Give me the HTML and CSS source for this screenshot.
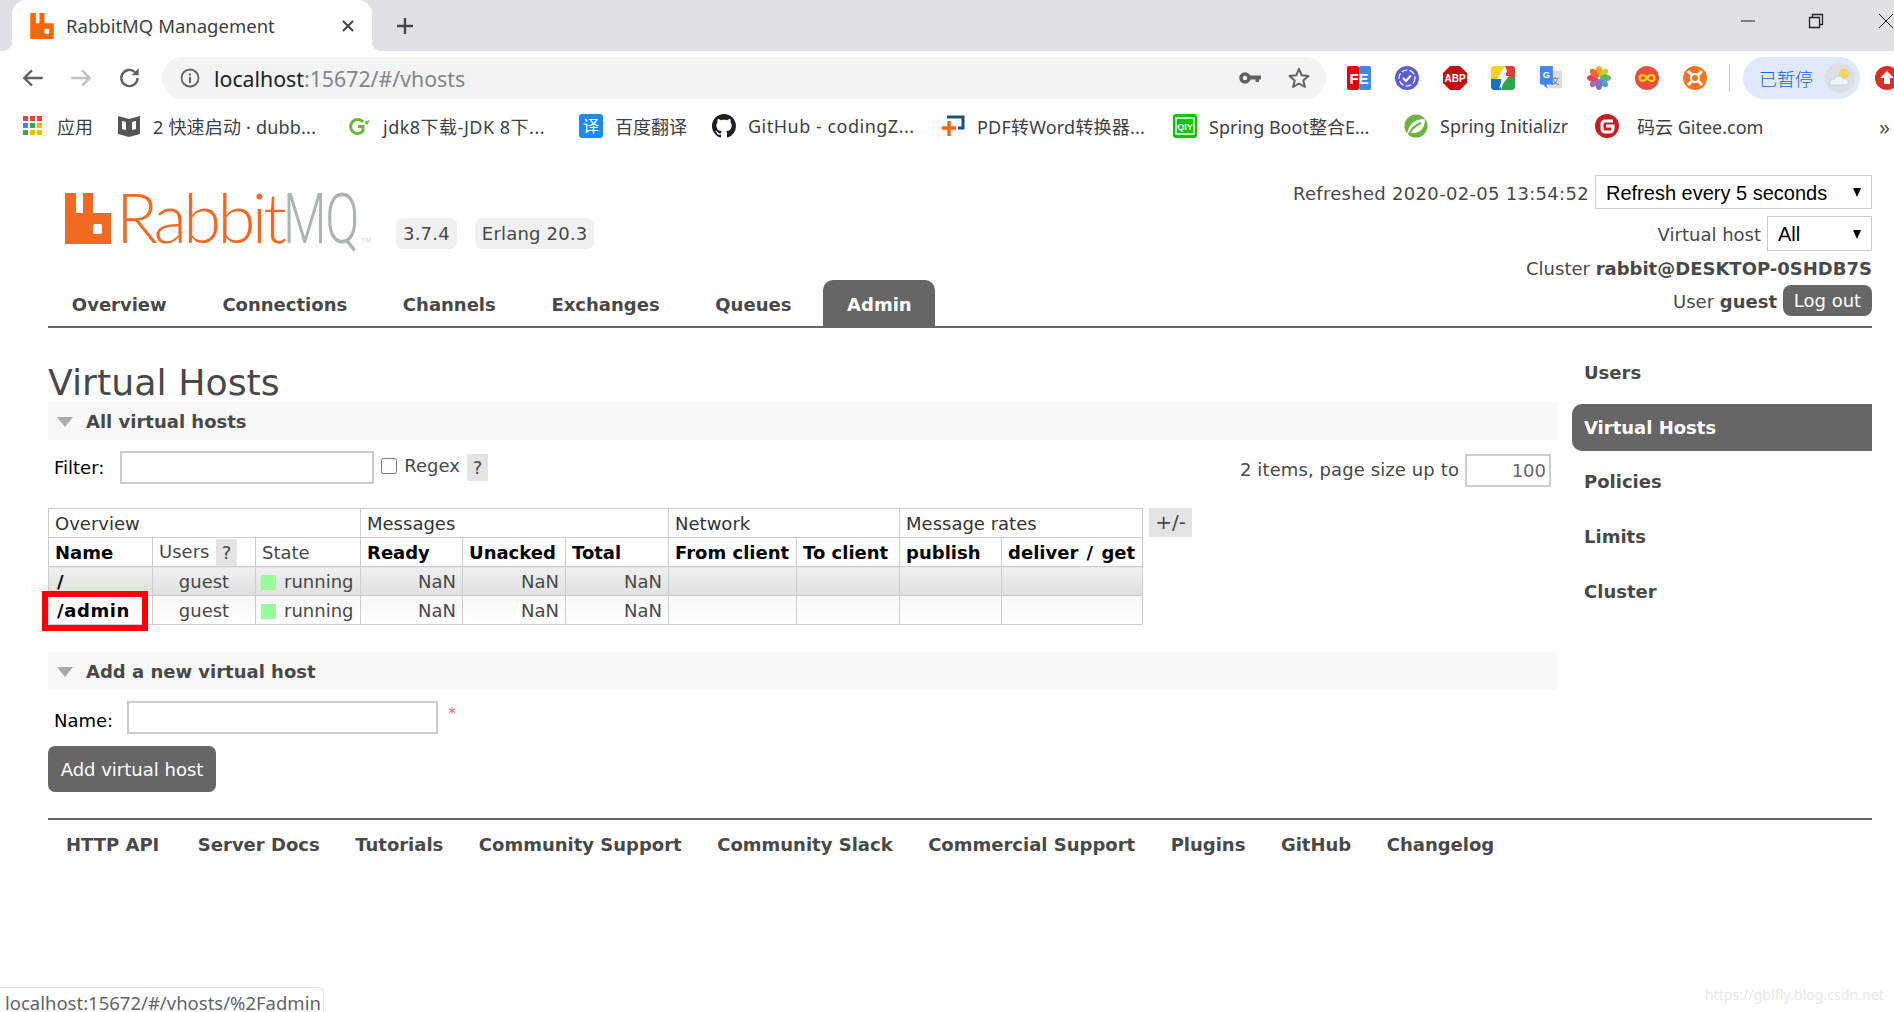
FILE: index.html
```html
<!DOCTYPE html>
<html lang="en">
<head>
    <meta charset="UTF-8">
    <meta name="viewport" content="width=device-width, initial-scale=1.0">
    <title>RabbitMQ Management</title>
    <link rel="stylesheet" href="styles.css">
</head>
<body>

    <!-- browser tabs -->
    <div class="tab_strip">
        <div class="tab">
            <svg class="favicon" viewBox="0 0 46 51"><path d="M0 0H11V20H18V0H28V20H46V51H0Z" fill="#f60"/><rect x="28" y="31" width="9" height="10" rx="2" fill="#fff"/></svg>
            <span class="tab_title">RabbitMQ Management</span>
            <svg class="tab_close" viewBox="0 0 14 14"><path d="M2 2L12 12M12 2L2 12" stroke="#444" stroke-width="2" fill="none"/></svg>
        </div>
        <svg class="new_tab" viewBox="0 0 18 18"><path d="M9 1V17M1 9H17" stroke="#444" stroke-width="2.4" fill="none"/></svg>
        <div class="window_btns">
            <svg viewBox="0 0 16 16"><path d="M1 8H15" stroke="#222" stroke-width="1" fill="none"/></svg>
            <svg viewBox="0 0 16 16"><path d="M1.5 4.5H11.5V14.5H1.5ZM4.5 4.5V1.5H14.5V11.5H11.5" stroke="#222" stroke-width="1.3" fill="none"/></svg>
            <svg viewBox="0 0 16 16"><path d="M1 1L15 15M15 1L1 15" stroke="#222" stroke-width="1" fill="none"/></svg>
        </div>
    </div>

    <!-- address bar -->
    <div class="toolbar">
        <svg class="tool_icon" viewBox="0 0 24 24"><path d="M21 12H4M11 5L4 12L11 19" stroke="#5f6368" stroke-width="2.2" fill="none"/></svg>
        <svg class="tool_icon" viewBox="0 0 24 24"><path d="M3 12H20M13 5L20 12L13 19" stroke="#bdc1c6" stroke-width="2.2" fill="none"/></svg>
        <svg class="tool_icon" viewBox="0 0 24 24"><path d="M19 12A7.5 7.5 0 1 1 16.6 6.5" stroke="#5f6368" stroke-width="2.2" fill="none"/><path d="M20 3V9.5H13.5Z" fill="#5f6368"/></svg>
        <div class="omnibox">
            <svg class="info_icon" viewBox="0 0 20 20"><circle cx="10" cy="10" r="8.5" stroke="#5f6368" stroke-width="1.8" fill="none"/><path d="M10 9V15M10 5.5V7.5" stroke="#5f6368" stroke-width="2" fill="none"/></svg>
            <span class="url"><b>localhost</b>:15672/#/vhosts</span>
            <svg class="key_icon" viewBox="0 0 22 14"><circle cx="6" cy="7" r="4" stroke="#5f6368" stroke-width="3.6" fill="none"/><path d="M10 4.5H22V8.5H20V11H16.5V8.5H10Z" fill="#5f6368"/></svg>
            <svg class="star_icon" viewBox="0 0 24 24"><path d="M12 3L14.7 9.3L21.5 9.9L16.3 14.4L17.9 21L12 17.5L6.1 21L7.7 14.4L2.5 9.9L9.3 9.3Z" stroke="#5f6368" stroke-width="2" stroke-linejoin="round" fill="none"/></svg>
        </div>
        <div class="ext_icons">
            <svg viewBox="0 0 24 24"><rect width="12" height="24" rx="2" fill="#e8000d"/><rect x="12" width="12" height="24" rx="2" fill="#3f86ee"/><text x="12" y="18" class="svg_text" font-size="15" fill="#fff" text-anchor="middle">FE</text></svg>
            <svg viewBox="0 0 24 24"><circle cx="12" cy="12" r="12" fill="#5c5fd2"/><circle cx="12" cy="12" r="8" stroke="#fff" stroke-width="1.2" stroke-dasharray="6 2" fill="none"/><path d="M8 12L11 15L16 9.5" stroke="#fff" stroke-width="2" fill="none"/></svg>
            <svg viewBox="0 0 24 24"><path d="M7 0H17L24 7V17L17 24H7L0 17V7Z" fill="#c70d0d"/><text x="12" y="16" class="svg_text" font-size="10" fill="#fff" text-anchor="middle">ABP</text></svg>
            <svg viewBox="0 0 24 24"><path d="M2 0H14L6 13H0V2Z" fill="#f7d11e"/><path d="M14 0H22L24 2V11H14L16 5Z" fill="#e53a35"/><path d="M24 11V22L22 24H10L14 11Z" fill="#2fa44f"/><path d="M0 13H10L10 24H2L0 22Z" fill="#1a6fc0"/><path d="M15 1L6 13H11L8 23L18 10H13Z" fill="#fff"/></svg>
            <svg viewBox="0 0 24 26"><rect x="9" y="5" width="15" height="19" rx="1" fill="#dcdcdc"/><text x="16.5" y="19" font-size="9" fill="#666" text-anchor="middle" class="svg_cjk">文</text><path d="M1 0H14V20H7L9 25L3 20H1L0 19V1Z" fill="#4285f4"/><text x="7" y="13" class="svg_text" font-size="10" fill="#fff" text-anchor="middle">G</text></svg>
            <svg viewBox="0 0 24 24">
                <ellipse cx="12" cy="5.5" rx="3.4" ry="5.5" fill="#f6a81c"/>
                <ellipse cx="12" cy="5.5" rx="3.4" ry="5.5" fill="#c6d02c" transform="rotate(45 12 12)"/>
                <ellipse cx="12" cy="5.5" rx="3.4" ry="5.5" fill="#5fb85a" transform="rotate(90 12 12)"/>
                <ellipse cx="12" cy="5.5" rx="3.4" ry="5.5" fill="#4aa3cf" transform="rotate(135 12 12)"/>
                <ellipse cx="12" cy="5.5" rx="3.4" ry="5.5" fill="#7d75c2" transform="rotate(180 12 12)"/>
                <ellipse cx="12" cy="5.5" rx="3.4" ry="5.5" fill="#a66bb5" transform="rotate(225 12 12)"/>
                <ellipse cx="12" cy="5.5" rx="3.4" ry="5.5" fill="#e0455b" transform="rotate(270 12 12)"/>
                <ellipse cx="12" cy="5.5" rx="3.4" ry="5.5" fill="#ed6a2e" transform="rotate(315 12 12)"/>
            </svg>
            <svg viewBox="0 0 24 24"><circle cx="12" cy="12" r="12" fill="#ea4f3d"/><path d="M12 12C9.5 8 4.5 8.5 4.5 12S9.5 16 12 12S19.5 8 19.5 12S14.5 16 12 12Z" stroke="#f8d21f" stroke-width="2" fill="none"/></svg>
            <svg viewBox="0 0 24 24"><circle cx="12" cy="12" r="12" fill="#f77423"/><circle cx="12" cy="12" r="4" fill="none" stroke="#fff" stroke-width="2"/><path d="M5 5L9 9M19 5L15 9M5 19L9 15M19 19L15 15" stroke="#fff" stroke-width="3" fill="none"/></svg>
        </div>
        <div class="tool_line"></div>
        <div class="profile">
            <span>已暂停</span>
            <svg viewBox="0 0 30 30"><circle cx="15" cy="15" r="15" fill="#dcdfe3"/><circle cx="19" cy="11" r="5" fill="#f3d35a"/><path d="M6 22C3 19 6 15 9 16C10 12 17 12 18 16C22 15 25 19 22 22Z" fill="#eef6fc" stroke="#bcd8ec"/></svg>
        </div>
        <svg class="update_icon" viewBox="0 0 24 24"><circle cx="12" cy="12" r="12" fill="#d93025"/><path d="M12 5L19 12H15V18H9V12H5Z" fill="#fff"/></svg>
    </div>

    <!-- bookmarks -->
    <div class="bookmarks">
        <div class="bm bm1">
            <svg viewBox="0 0 20 20">
                <rect x="0" y="0" width="5" height="5" fill="#ea4335"/><rect x="7" y="0" width="5" height="5" fill="#ea4335"/><rect x="14" y="0" width="5" height="5" fill="#ea4335"/>
                <rect x="0" y="7" width="5" height="5" fill="#4285f4"/><rect x="7" y="7" width="5" height="5" fill="#34a853"/><rect x="14" y="7" width="5" height="5" fill="#fbbc04"/>
                <rect x="0" y="14" width="5" height="5" fill="#34a853"/><rect x="7" y="14" width="5" height="5" fill="#fbbc04"/><rect x="14" y="14" width="5" height="5" fill="#fbbc04"/>
            </svg>
            <span>应用</span>
        </div>
        <div class="bm bm2">
            <svg viewBox="0 0 24 24"><path d="M1 2L12 5L23 2V20L12 23L1 20Z" fill="#555"/><path d="M5 7L9 8V16L5 15ZM15 8L19 7V15L15 16Z" fill="#fff"/></svg>
            <span>2 快速启动 · dubb...</span>
        </div>
        <div class="bm bm3">
            <svg viewBox="0 0 24 24"><path d="M16 8A7 7 0 1 0 16 17V12.5H11" stroke="#6cb33f" stroke-width="3" fill="none"/><path d="M17 8L23 6L20 11Z" fill="#6cb33f"/></svg>
            <span>jdk8下载-JDK 8下...</span>
        </div>
        <div class="bm bm4">
            <svg viewBox="0 0 24 24"><rect width="24" height="24" rx="3" fill="#1e88f5"/><text x="12" y="18" font-size="16" fill="#fff" text-anchor="middle" class="svg_cjk">译</text></svg>
            <span>百度翻译</span>
        </div>
        <div class="bm bm5">
            <svg viewBox="0 0 16 16"><path fill="#1b1f23" d="M8 0C3.58 0 0 3.58 0 8c0 3.54 2.29 6.53 5.47 7.59.4.07.55-.17.55-.38 0-.19-.01-.82-.01-1.49-2.01.37-2.53-.49-2.69-.94-.09-.23-.48-.94-.82-1.13-.28-.15-.68-.52-.01-.53.63-.01 1.08.58 1.23.82.72 1.21 1.87.87 2.33.66.07-.52.28-.87.51-1.07-1.78-.2-3.64-.89-3.64-3.95 0-.87.31-1.59.82-2.15-.08-.2-.36-1.02.08-2.12 0 0 .67-.21 2.2.82.64-.18 1.32-.27 2-.27s1.36.09 2 .27c1.53-1.04 2.2-.82 2.2-.82.44 1.1.16 1.92.08 2.12.51.56.82 1.27.82 2.15 0 3.07-1.87 3.75-3.65 3.95.29.25.54.73.54 1.48 0 1.07-.01 1.93-.01 2.2 0 .21.15.46.55.38A8.01 8.01 0 0 0 16 8c0-4.42-3.58-8-8-8z"/></svg>
            <span>GitHub - codingZ...</span>
        </div>
        <div class="bm bm6">
            <svg viewBox="0 0 24 24"><path d="M6 3H22V14H17" stroke="#1c4f80" stroke-width="3" fill="none"/><path d="M1 14H15M8 7V22" stroke="#f2640f" stroke-width="3.4" fill="none"/></svg>
            <span>PDF转Word转换器...</span>
        </div>
        <div class="bm bm7">
            <svg viewBox="0 0 24 24"><rect width="24" height="24" rx="3" fill="#05c505"/><rect x="3" y="4" width="18" height="16" fill="none" stroke="#fff" stroke-width="1.5"/><text x="12" y="16" class="svg_text" font-size="9" fill="#fff" text-anchor="middle">QIY</text></svg>
            <span>Spring Boot整合E...</span>
        </div>
        <div class="bm bm8">
            <svg viewBox="0 0 24 24"><circle cx="12" cy="12" r="11.5" fill="#6db33f"/><path d="M3 20C5 9 12 5 21 5C21 14 16 20 8 19Z" fill="#fff"/><path d="M5 20C8 14 12 11 17 9" stroke="#6db33f" stroke-width="2" fill="none"/></svg>
            <span>Spring Initializr</span>
        </div>
        <div class="bm bm9">
            <svg viewBox="0 0 24 24"><circle cx="12" cy="12" r="12" fill="#c71d23"/><path d="M18 7H10A3 3 0 0 0 7 10V15A3 3 0 0 0 10 18H15A3 3 0 0 0 18 15V12H11" stroke="#fff" stroke-width="3" fill="none"/></svg>
            <span>码云 Gitee.com</span>
        </div>
        <div class="bm_more">»</div>
    </div>

    <!-- page -->
    <div class="page">
        <div class="header">
            <div class="header_left">
                <div class="logo_row">
                    <svg class="logo_icon" viewBox="0 0 46 51"><path d="M0 0H11V20H18V0H28V20H46V51H0Z" fill="#f26a21"/><rect x="28" y="31" width="9" height="10" rx="2" fill="#fff"/></svg>
                    <div class="logo_text"><span class="logo_rabbit">Rabbit</span><span class="logo_mq">MQ</span><span class="logo_tm">TM</span></div>
                    <div class="badges">
                        <span class="badge">3.7.4</span>
                        <span class="badge">Erlang 20.3</span>
                    </div>
                </div>
                <ul class="menu">
                    <li>Overview</li>
                    <li>Connections</li>
                    <li>Channels</li>
                    <li>Exchanges</li>
                    <li>Queues</li>
                    <li class="selected">Admin</li>
                </ul>
            </div>
            <div class="header_right">
                <div class="login_row refresh_row">
                    <span class="refreshed">Refreshed 2020-02-05 13:54:52</span>
                    <div class="select_wrap refresh_select"><select><option>Refresh every 5 seconds</option></select></div>
                </div>
                <div class="login_row vhost_row">
                    <span>Virtual host</span>
                    <div class="select_wrap vhost_select"><select><option>All</option></select></div>
                </div>
                <div class="login_row cluster_row">Cluster&nbsp;<b>rabbit@DESKTOP-0SHDB7S</b></div>
                <div class="login_row user_row">
                    <span>User <b>guest</b></span>
                    <div class="logout_btn">Log out</div>
                </div>
            </div>
        </div>

        <div class="content">
            <div class="main">
                <h1>Virtual Hosts</h1>

                <div class="section_head"><i class="arrow"></i>All virtual hosts</div>
                <div class="filter_row">
                    <label class="filter_label">Filter:</label>
                    <input type="text" class="filter_input">
                    <input type="checkbox" class="regex_check">
                    <span class="regex_label">Regex</span>
                    <span class="help">?</span>
                    <span class="page_size">2 items, page size up to</span>
                    <input type="text" class="size_input" value="100">
                </div>

                <div class="table_row">
                    <table class="list">
                        <colgroup>
                            <col class="c_name"><col class="c_users"><col class="c_state"><col class="c_ready"><col class="c_unacked">
                            <col class="c_total"><col class="c_from"><col class="c_to"><col class="c_pub"><col class="c_get">
                        </colgroup>
                        <tr class="group_row">
                            <th colspan="3">Overview</th>
                            <th colspan="3">Messages</th>
                            <th colspan="2">Network</th>
                            <th colspan="2">Message rates</th>
                        </tr>
                        <tr class="name_row">
                            <th class="strong">Name</th>
                            <th>Users <span class="help help_table">?</span></th>
                            <th>State</th>
                            <th class="strong">Ready</th>
                            <th class="strong">Unacked</th>
                            <th class="strong">Total</th>
                            <th class="strong">From client</th>
                            <th class="strong">To client</th>
                            <th class="strong">publish</th>
                            <th class="strong wide_words">deliver / get</th>
                        </tr>
                        <tr class="alt1">
                            <td class="vname">/</td>
                            <td class="center">guest</td>
                            <td class="state"><i class="green"></i>running</td>
                            <td class="num">NaN</td><td class="num">NaN</td><td class="num">NaN</td>
                            <td></td><td></td><td></td><td></td>
                        </tr>
                        <tr class="alt2">
                            <td class="vname marked">/admin<span class="red_box"></span></td>
                            <td class="center">guest</td>
                            <td class="state"><i class="green"></i>running</td>
                            <td class="num">NaN</td><td class="num">NaN</td><td class="num">NaN</td>
                            <td></td><td></td><td></td><td></td>
                        </tr>
                    </table>
                    <div class="columns_btn">+/-</div>
                </div>

                <div class="section_head second"><i class="arrow"></i>Add a new virtual host</div>
                <div class="name_form">
                    <label class="filter_label name_label">Name:</label>
                    <input type="text" class="name_input">
                    <span class="mand">*</span>
                </div>
                <div class="add_btn">Add virtual host</div>
            </div>

            <ul class="side_menu">
                <li>Users</li>
                <li class="selected">Virtual Hosts</li>
                <li>Policies</li>
                <li>Limits</li>
                <li>Cluster</li>
            </ul>
        </div>

        <ul class="footer">
            <li>HTTP API</li>
            <li>Server Docs</li>
            <li>Tutorials</li>
            <li>Community Support</li>
            <li>Community Slack</li>
            <li>Commercial Support</li>
            <li>Plugins</li>
            <li>GitHub</li>
            <li>Changelog</li>
        </ul>
    </div>

    <!-- link preview and watermark, over the page -->
    <div class="status_bubble">localhost:15672/#/vhosts/%2Fadmin</div>
    <div class="watermark">https://gblfly.blog.csdn.net</div>
</body>
</html>
```

FILE: styles.css
```css
*{
    box-sizing: border-box;
}
html, body{
    margin: 0;
    height: 1012px;
    overflow: hidden;
    background-color: #fff;
}
body{
    position: relative;
    font-family: "DejaVu Sans", sans-serif;
    color: #484848;
}
ul{
    list-style: none;
    margin: 0;
    padding: 0;
}
.svg_text{
    font-family: "Liberation Sans", sans-serif;
    font-weight: bold;
}
.svg_cjk{
    font-family: "Noto Sans CJK SC", sans-serif;
}

/* browser tabs */
.tab_strip{
    height: 51px;
    background-color: #dee1e6;
    display: flex;
    align-items: center;
}
.tab{
    position: relative;
    width: 360px;
    height: 51px;
    margin-left: 12px;
    padding-left: 18px;
    background-color: #fff;
    border-radius: 14px 14px 0 0;
    display: flex;
    align-items: center;
    font-family: "Noto Sans", "Noto Sans CJK SC", sans-serif;
    font-size: 18.5px;
    color: #3c4043;
}
.tab::before, .tab::after{
    content: "";
    position: absolute;
    bottom: 0;
    width: 10px;
    height: 10px;
}
.tab::before{
    left: -10px;
    background: radial-gradient(circle at 0 0, #dee1e6 10px, #fff 10.5px);
}
.tab::after{
    right: -10px;
    background: radial-gradient(circle at 100% 0, #dee1e6 10px, #fff 10.5px);
}
.favicon{
    width: 24px;
    height: 26px;
    margin-right: 12px;
}
.tab_title{
    width: 275px;
}
.tab_close{
    width: 14px;
    height: 14px;
}
.new_tab{
    width: 18px;
    height: 18px;
    margin-left: 24px;
}
.window_btns{
    margin-left: auto;
    display: flex;
    gap: 54px;
    align-items: center;
    height: 100%;
    padding-bottom: 10px;
}
.window_btns svg{
    width: 16px;
    height: 16px;
}
.window_btns svg:first-child{
    margin-right: -2px;
}

/* address bar */
.toolbar{
    height: 56px;
    padding-top: 6px;
    padding-left: 20px;
    display: flex;
    align-items: flex-start;
    background-color: #fff;
    overflow: hidden;
}
.toolbar > *{
    flex: none;
}
.tool_icon{
    width: 26px;
    height: 26px;
    margin-top: 8px;
    margin-right: 22px;
}
.tool_icon + .tool_icon + .tool_icon{
    margin-left: 1px;
    margin-right: 23px;
}
.omnibox{
    width: 1164px;
    height: 42px;
    margin-left: -4px;
    padding: 0 15px 0 18px;
    border-radius: 21px;
    background-color: #f1f3f4;
    display: flex;
    align-items: center;
}
.info_icon{
    width: 20px;
    height: 20px;
    margin-right: 14px;
}
.url{
    flex: 1;
    font-family: "Noto Sans", sans-serif;
    font-size: 21.3px;
    color: #80868b;
}
.url b{
    font-weight: normal;
    color: #202124;
}
.key_icon{
    width: 22px;
    height: 14px;
    margin-right: 26px;
}
.star_icon{
    width: 24px;
    height: 24px;
}
.ext_icons{
    width: 368px;
    margin-left: 21px;
    display: flex;
    gap: 24px;
    padding-top: 9px;
}
.ext_icons svg{
    width: 24px;
    height: 24px;
}
.tool_line{
    width: 1px;
    height: 28px;
    margin-top: 7px;
    margin-left: 14px;
    background-color: #ccc;
}
.profile{
    width: 117px;
    height: 42px;
    margin-left: 13px;
    padding-left: 16px;
    border-radius: 21px;
    background-color: #dfe9f9;
    display: flex;
    align-items: center;
    gap: 12px;
    font-family: "Noto Sans CJK SC", sans-serif;
    font-weight: 300;
    font-size: 18px;
    color: #1a66d2;
}
.profile svg{
    flex: none;
    width: 30px;
    height: 30px;
}
.update_icon{
    width: 24px;
    height: 24px;
    margin-left: 15px;
    margin-top: 9px;
}

/* bookmarks */
.bookmarks{
    height: 39px;
    padding-left: 23px;
    padding-bottom: 2px;
    display: flex;
    align-items: center;
    font-family: "Noto Sans", "Noto Sans CJK SC", sans-serif;
    font-size: 18px;
    color: #3c4043;
    white-space: nowrap;
}
.bm{
    display: flex;
    align-items: center;
    gap: 12px;
}
.bm svg{
    flex: none;
    width: 24px;
    height: 24px;
}
.bm1{ width: 94px; gap: 14px; }
.bm2{ width: 230px; letter-spacing: 0.2px; }
.bm3{ width: 232px; letter-spacing: 0.5px; }
.bm4{ width: 133px; }
.bm5{ width: 229px; letter-spacing: 0.5px; }
.bm6{ width: 232px; letter-spacing: 0.2px; }
.bm7{ width: 231px; }
.bm8{ width: 191px; }
.bm9{ width: 284px; gap: 18px; }
.bm1 svg{
    width: 20px;
    height: 20px;
}
.bm_more{
    font-size: 22px;
    line-height: 30px;
    color: #555;
}

/* page */
.page{
    padding: 0 22px 0 48px;
}
.header{
    height: 182px;
    border-bottom: 2px solid #666;
    display: flex;
    justify-content: space-between;
}
.header_left{
    display: flex;
    flex-direction: column;
    justify-content: space-between;
}
.logo_row{
    display: flex;
    align-items: flex-start;
    padding-left: 17px;
    padding-top: 47px;
}
.logo_icon{
    width: 46px;
    height: 51px;
}
.logo_text{
    height: 51px;
    width: 261px;
    margin-left: 5px;
    font-family: "Lato", sans-serif;
    font-weight: 300;
    font-size: 69px;
    line-height: 47px;
    letter-spacing: -3.8px;
    white-space: nowrap;
}
.logo_rabbit{
    color: #f26a21;
}
.logo_mq{
    display: inline-block;
    width: 77px;
    font-family: "Roboto", sans-serif;
    font-size: 70px;
    letter-spacing: -2px;
    color: #a9b5ae;
    transform: scaleX(0.72);
    transform-origin: left;
}
.logo_tm{
    font-size: 7px;
    letter-spacing: 0;
    color: #bbb;
    font-family: "DejaVu Sans", sans-serif;
    margin-left: 1px;
}
.badges{
    display: flex;
    gap: 18px;
    margin-left: 19px;
    margin-top: 25px;
}
.badge{
    height: 31px;
    padding: 0 7px;
    border-radius: 7px;
    background-color: #f0f0f0;
    font-size: 18px;
    line-height: 32px;
    letter-spacing: 0.2px;
    white-space: nowrap;
}
.menu{
    display: flex;
    align-items: flex-end;
    height: 47px;
    gap: 8px;
    font-size: 18px;
    font-weight: bold;
}
.menu li{
    height: 46px;
    padding: 0 23.85px;
    line-height: 50px;
}
.menu .selected{
    background-color: #666;
    color: #fff;
    border-radius: 10px 10px 0 0;
}
.header_right{
    display: flex;
    flex-direction: column;
    align-items: flex-end;
    padding-top: 29px;
    font-size: 18px;
}
.login_row{
    display: flex;
    align-items: center;
    gap: 6px;
    white-space: nowrap;
}
.login_row > span{
    padding-top: 2px;
}
.refreshed{
    letter-spacing: 0.3px;
}
.refresh_row{
    height: 34px;
}
.vhost_row{
    height: 35px;
    margin-top: 7px;
}
.cluster_row{
    gap: 0;
    height: 34px;
}
.user_row{
    height: 31px;
}
.select_wrap{
    position: relative;
}
.select_wrap::after{
    content: "";
    position: absolute;
    right: 11px;
    top: 50%;
    margin-top: -4px;
    border-left: 4.5px solid transparent;
    border-right: 4.5px solid transparent;
    border-top: 9px solid #000;
}
.select_wrap select{
    appearance: none;
    width: 100%;
    height: 100%;
    padding: 2px 0 0 10px;
    border: 1px solid #ccc;
    border-radius: 0;
    background-color: #fff;
    font-family: "Liberation Sans", sans-serif;
    font-size: 20px;
    color: #000;
}
.vhost_select select{
    padding-top: 0;
}
.refresh_select{
    width: 277px;
    height: 34px;
}
.vhost_select{
    width: 105px;
    height: 35px;
}
.logout_btn{
    width: 89px;
    height: 31px;
    border-radius: 8px;
    background-color: #666;
    color: #fff;
    text-align: center;
    line-height: 31px;
}

.content{
    display: flex;
    gap: 15px;
}
.main{
    width: 1509px;
    height: 490px;
}
h1{
    margin: 33px 0 0;
    height: 41px;
    font-size: 36.3px;
    font-weight: normal;
    line-height: 43px;
}
.section_head{
    height: 38px;
    padding-left: 38px;
    position: relative;
    background-color: #f8f8f8;
    font-size: 18px;
    font-weight: bold;
    line-height: 40px;
}
.section_head.second{
    margin-top: 27px;
}
.arrow{
    position: absolute;
    left: 9px;
    top: 15px;
    border-left: 8px solid transparent;
    border-right: 8px solid transparent;
    border-top: 10px solid #aaa;
}
.filter_row{
    height: 68px;
    padding-top: 11px;
    display: flex;
    align-items: flex-start;
    font-size: 18px;
}
.filter_label{
    color: #000;
    margin-left: 6px;
    line-height: 34px;
}
.name_label{
    line-height: 40px;
}
.filter_input{
    width: 254px;
    height: 33px;
    margin-left: 16px;
    border: 2px solid #ccc;
}
.regex_check{
    width: 16px;
    height: 16px;
    margin: 7px 0 0 7px;
}
.regex_label{
    margin-left: 7px;
    line-height: 30px;
}
.help{
    width: 21px;
    height: 27px;
    margin: 3px 0 0 7px;
    background-color: #e4e4e4;
    text-align: center;
    line-height: 27px;
    display: inline-block;
    font-weight: normal;
}
.page_size{
    margin-left: auto;
    margin-right: 6px;
    margin-top: 3px;
    line-height: 32px;
    letter-spacing: 0.1px;
}
.size_input{
    width: 86px;
    height: 33px;
    margin-top: 3px;
    margin-right: 6px;
    border: 2px solid #ccc;
    padding: 0 3px;
    text-align: right;
    font-family: "DejaVu Sans", sans-serif;
    font-size: 18px;
    color: #666;
}
.table_row{
    display: flex;
    gap: 6px;
    align-items: flex-start;
}
.list{
    border-collapse: collapse;
    table-layout: fixed;
    width: 1094px;
    font-size: 18px;
}
.c_name{ width: 104px; }
.c_users{ width: 103px; }
.c_state{ width: 105px; }
.c_ready{ width: 102px; }
.c_unacked{ width: 103px; }
.c_total{ width: 103px; }
.c_from{ width: 128px; }
.c_to{ width: 103px; }
.c_pub{ width: 102px; }
.c_get{ width: 141px; }
.list th, .list td{
    height: 29px;
    padding: 1px 6px 0;
    border: 1px solid #ccc;
    text-align: left;
    white-space: nowrap;
}
.list th{
    font-weight: normal;
}
.list th.strong{
    font-weight: bold;
    color: #000;
}
.list th.wide_words{
    word-spacing: 2px;
}
.group_row th{
    color: #333;
}
.list .help_table{
    height: 27px;
    margin: 0 0 0 1px;
    vertical-align: middle;
}
.alt1 td{
    background: linear-gradient(#f0f0f0, #e0e0e0);
}
.alt2 td{
    background: linear-gradient(#f8f8f8, #fff);
}
.list .vname{
    padding-left: 8px;
    font-weight: bold;
    color: #000;
}
.marked{
    position: relative;
    letter-spacing: 0.6px;
}
.red_box{
    position: absolute;
    left: -7px;
    top: -5px;
    width: 106px;
    height: 40px;
    border: 6px solid #f00;
}
.list .center{
    text-align: center;
}
.list .num{
    text-align: right;
}
.list .state{
    padding-left: 5px;
    padding-right: 4px;
}
.green{
    display: inline-block;
    width: 15px;
    height: 15px;
    margin-right: 8px;
    vertical-align: -2px;
    background-color: #99fb99;
}
.columns_btn{
    width: 43px;
    height: 29px;
    background-color: #e4e4e4;
    text-align: center;
    line-height: 29px;
    font-size: 20px;
}
.name_form{
    height: 56px;
    padding-top: 11px;
    display: flex;
    align-items: flex-start;
    font-size: 18px;
}
.name_input{
    width: 311px;
    height: 33px;
    margin-left: 14px;
    border: 2px solid #ccc;
}
.mand{
    margin-left: 10px;
    color: #f66;
    font-size: 15px;
    line-height: 27px;
}
.add_btn{
    width: 168px;
    height: 46px;
    border-radius: 7px;
    background-color: #666;
    color: #fff;
    text-align: center;
    font-size: 18px;
    line-height: 47px;
}
.side_menu{
    flex: 1;
    margin-top: 21px;
    display: flex;
    flex-direction: column;
    gap: 7.7px;
    font-size: 18px;
    font-weight: bold;
}
.side_menu li{
    height: 47px;
    padding-left: 12px;
    line-height: 48px;
}
.side_menu .selected{
    background-color: #666;
    color: #fff;
    border-radius: 10px 0 0 10px;
}
.footer{
    height: 60px;
    border-top: 2px solid #666;
    padding-left: 18px;
    display: flex;
    gap: 35.5px;
    font-size: 18px;
    font-weight: bold;
    line-height: 50px;
}
.footer li:first-child{
    margin-right: 3px;
}

/* link preview and watermark */
.status_bubble{
    position: absolute;
    left: 0;
    bottom: 0;
    width: 324px;
    height: 25px;
    padding-left: 5px;
    border-top: 1px solid #e0e0e0;
    border-right: 1px solid #e0e0e0;
    border-top-right-radius: 6px;
    background-color: #fff;
    font-family: "Noto Sans", sans-serif;
    font-size: 18.5px;
    line-height: 30px;
    color: #5f6368;
    overflow: hidden;
    white-space: nowrap;
}
.watermark{
    position: absolute;
    right: 10px;
    bottom: 8px;
    font-family: "Noto Sans", sans-serif;
    font-size: 14.2px;
    color: #e8e8e8;
}
```
